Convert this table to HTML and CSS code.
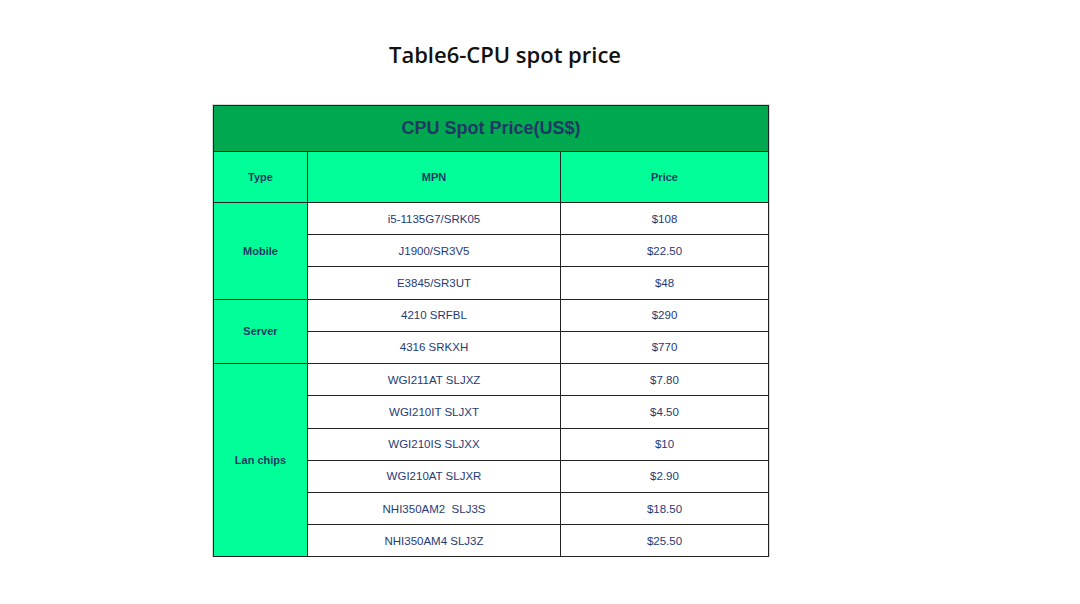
FILE: index.html
```html
<!DOCTYPE html>
<html lang="en">
<head>
<meta charset="utf-8">
<title>Table6-CPU spot price</title>
<link rel="stylesheet" href="styles.css">
</head>
<body>
<main class="page">
  <h1 class="title">Table6-CPU spot price</h1>
  <table class="price-table">
    <colgroup>
      <col class="col-type">
      <col class="col-mpn">
      <col class="col-price">
    </colgroup>
    <thead>
      <tr class="row-caption"><th colspan="3">CPU Spot Price(US$)</th></tr>
      <tr class="row-head"><th>Type</th><th>MPN</th><th>Price</th></tr>
    </thead>
    <tbody>
      <tr><th class="type" rowspan="3">Mobile</th><td>i5-1135G7/SRK05</td><td>$108</td></tr>
      <tr><td>J1900/SR3V5</td><td>$22.50</td></tr>
      <tr><td>E3845/SR3UT</td><td>$48</td></tr>
      <tr><th class="type" rowspan="2">Server</th><td>4210 SRFBL</td><td>$290</td></tr>
      <tr><td>4316 SRKXH</td><td>$770</td></tr>
      <tr><th class="type" rowspan="6">Lan chips</th><td>WGI211AT SLJXZ</td><td>$7.80</td></tr>
      <tr><td>WGI210IT SLJXT</td><td>$4.50</td></tr>
      <tr><td>WGI210IS SLJXX</td><td>$10</td></tr>
      <tr><td>WGI210AT SLJXR</td><td>$2.90</td></tr>
      <tr><td>NHI350AM2&nbsp; SLJ3S</td><td>$18.50</td></tr>
      <tr><td>NHI350AM4 SLJ3Z</td><td>$25.50</td></tr>
    </tbody>
  </table>
</main>
</body>
</html>
```
FILE: styles.css
```css
html, body {
  margin: 0;
  padding: 0;
  background: #ffffff;
}

.page {
  padding: 38px 0 0 213px;
  display: flex;
  flex-direction: column;
  align-items: flex-start;
}

.title {
  width: 584px;
  margin: 0;
  text-align: center;
  font-family: "Open Sans", "Noto Sans", sans-serif;
  font-weight: 600;
  font-size: 22px;
  line-height: 32px;
  color: #111111;
}

.price-table {
  margin-top: 35px;
  width: 555px;
  table-layout: fixed;
  border-collapse: collapse;
  font-family: "Liberation Sans", Arial, sans-serif;
  color: #1f3a75;
  box-shadow: 0 0 0 1px #d8d8d8;
}

.col-type { width: 94px; }
.col-mpn { width: 253px; }
.col-price { width: 208px; }

.price-table th,
.price-table td {
  border: 1px solid #222222;
  padding: 0;
  text-align: center;
  vertical-align: middle;
}

.price-table td {
  font-size: 11.5px;
  font-weight: 400;
  height: 31.22px;
}

.row-caption th {
  background: #00a84f;
  height: 45px;
  font-size: 18px;
  font-weight: 700;
  color: #1f3864;
}

.row-head th {
  background: #00ff99;
  height: 50px;
  font-size: 11px;
  font-weight: 700;
  color: #1f3864;
}

.price-table th.type {
  background: #00ff99;
  font-size: 11px;
  font-weight: 700;
  color: #1f3864;
}
```
